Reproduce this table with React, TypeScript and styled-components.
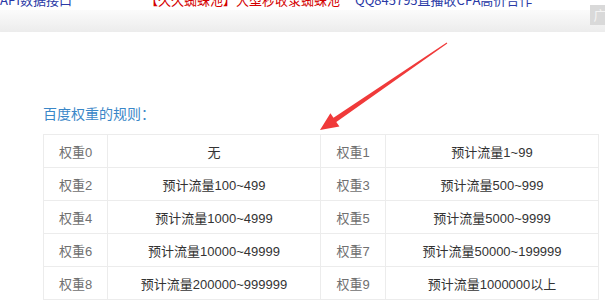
import React from "react";
import styled, { createGlobalStyle } from "styled-components";

const Global = createGlobalStyle`
  html, body { margin: 0; padding: 0; background: #fff; }
  body { font-family: "Liberation Sans", "Noto Sans CJK SC", sans-serif; overflow: hidden; }
`;

const Page = styled.div`
  position: relative;
  width: 605px;
  height: 300px;
  overflow: hidden;
`;

const TopBar = styled.div`
  display: grid;
  grid-template-columns: 145px 210px auto;
  margin-top: -10px;
  height: 20px;
  font-family: "Noto Sans CJK SC", sans-serif;
  font-size: 13px;
  line-height: 20px;
  white-space: nowrap;
`;

const TopLink = styled.span<{ $c: string }>`
  color: ${(p) => p.$c};
`;

const Band = styled.div`
  height: 22px;
  background: linear-gradient(#fbfbfb, #ececec);
`;

const AdMark = styled.div`
  position: absolute;
  left: 590px;
  top: 5px;
  width: 20px;
  height: 20px;
  background: #d9d9d9;
  color: #f4f4f4;
  font-family: "Noto Sans CJK SC", sans-serif;
  font-size: 13px;
  line-height: 20px;
  text-align: center;
`;

const Content = styled.div`
  padding: 71px 7px 0 43px;
`;

const Title = styled.div`
  font-family: "Noto Sans CJK SC", sans-serif;
  font-size: 14px;
  line-height: 20px;
  color: #3a87c8;
  margin-bottom: 11px;
`;

const Table = styled.table`
  border-collapse: collapse;
  width: 555px;
  table-layout: fixed;
  font-size: 13px;
`;

const Cell = styled.td<{ $label?: boolean }>`
  border: 1px solid #ececec;
  height: 32px;
  padding: 0;
  text-align: center;
  color: ${(p) => (p.$label ? "#707070" : "#333")};
`;

const ArrowSvg = styled.svg`
  position: absolute;
  left: 0;
  top: 0;
  pointer-events: none;
`;

const rows: [string, string, string, string][] = [
  ["权重0", "无", "权重1", "预计流量1~99"],
  ["权重2", "预计流量100~499", "权重3", "预计流量500~999"],
  ["权重4", "预计流量1000~4999", "权重5", "预计流量5000~9999"],
  ["权重6", "预计流量10000~49999", "权重7", "预计流量50000~199999"],
  ["权重8", "预计流量200000~999999", "权重9", "预计流量1000000以上"],
];

export default function App() {
  return (
    <Page>
      <Global />
      <TopBar>
        <TopLink $c="#2a3aa6">API数据接口</TopLink>
        <TopLink $c="#d40000">【久久蜘蛛池】大型秒收录蜘蛛池</TopLink>
        <TopLink $c="#2a3aa6">QQ845795直播收CPA高价合作</TopLink>
      </TopBar>
      <Band />
      <AdMark>广</AdMark>
      <Content>
        <Title>百度权重的规则：</Title>
        <Table>
          <colgroup>
            <col style={{ width: 64 }} />
            <col style={{ width: 213 }} />
            <col style={{ width: 65 }} />
            <col style={{ width: 213 }} />
          </colgroup>
          <tbody>
            {rows.map((r, i) => (
              <tr key={i}>
                <Cell $label>{r[0]}</Cell>
                <Cell>{r[1]}</Cell>
                <Cell $label>{r[2]}</Cell>
                <Cell>{r[3]}</Cell>
              </tr>
            ))}
          </tbody>
        </Table>
      </Content>
      <ArrowSvg width="605" height="300" viewBox="0 0 605 300">
        <polygon
          points="320,130 330.4,113.2 333.5,117.7 446.7,42.6 447.3,43.4 336.3,121.9 339.4,126.4"
          fill="#f03a3a"
        />
      </ArrowSvg>
    </Page>
  );
}
